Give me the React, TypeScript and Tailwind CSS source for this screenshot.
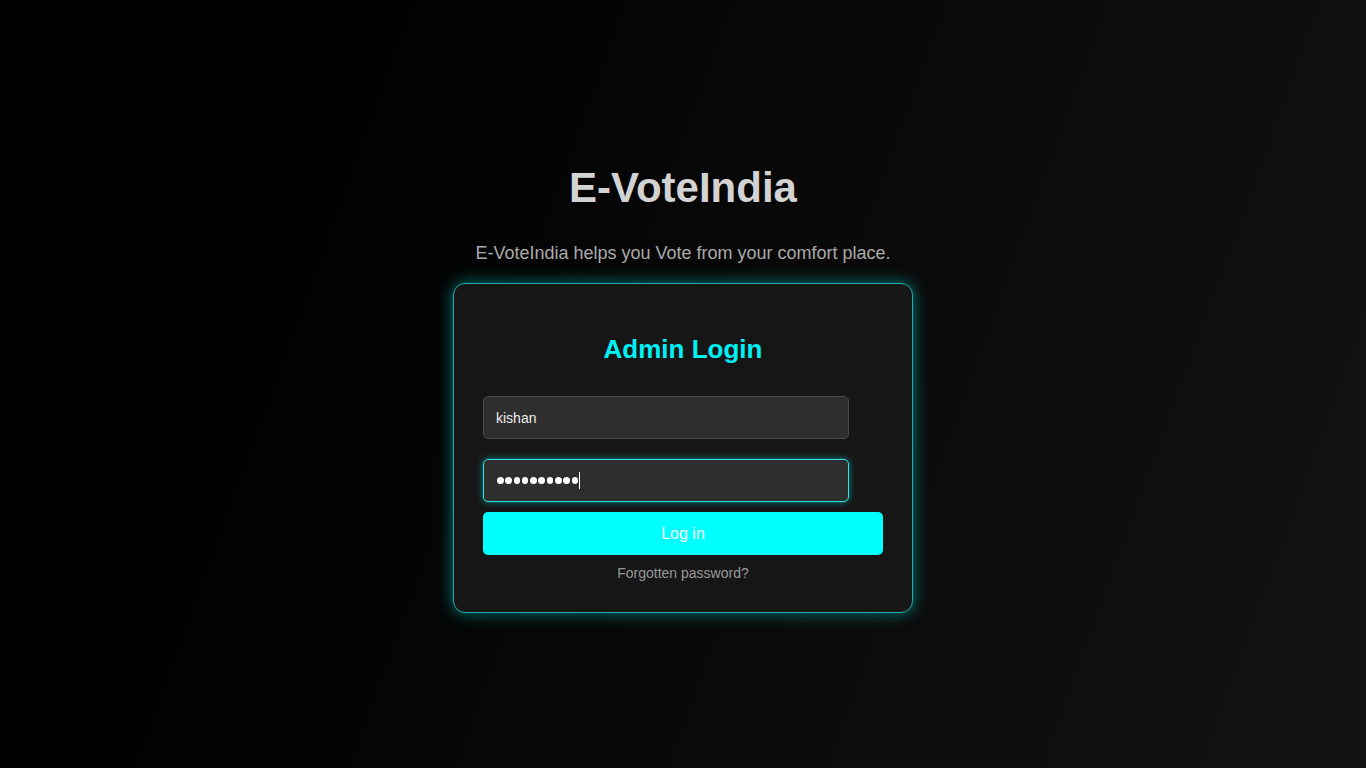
export default function App() {
  return (
    <div
      className="flex min-h-screen w-full flex-col items-center bg-[linear-gradient(110deg,#000_18%,#131313)] pt-[164px]"
      style={{ fontFamily: '"Liberation Sans", Arial, sans-serif' }}
    >
      <h1 className="text-[42px] leading-[48px] font-bold text-[#d3d3d3]">E-VoteIndia</h1>
      <p className="mt-[31px] text-[18px] leading-[21px] text-[#aaaaaa]">
        E-VoteIndia helps you Vote from your comfort place.
      </p>

      <div className="mt-[19px] flex h-[330px] w-[460px] flex-col rounded-[12px] border border-[#19b0b0] bg-[#161616] px-[29px] pt-[50px] shadow-[0_0_16px_rgba(0,255,255,0.45)]">
        <h2 className="text-center text-[26px] leading-[30px] font-bold text-[#00f0f5]">Admin Login</h2>

        <input
          readOnly
          value="kishan"
          className="mt-[32px] h-[43px] w-[366px] rounded-[5px] border border-[#4a4a4a] bg-[#2e2e2e] px-[12px] text-[14px] text-[#eeeeee] outline-none"
        />

        <div className="mt-[20px] flex h-[43px] w-[366px] items-center rounded-[5px] border border-[#2fe0e0] bg-[#2e2e2e] pl-[13px] shadow-[0_0_6px_rgba(0,255,255,0.5)]">
          <div className="flex items-center gap-[1.8px]">
            {Array.from({ length: 10 }).map((_, i) => (
              <span key={i} className="h-[6.5px] w-[6.5px] rounded-full bg-white" />
            ))}
          </div>
          <span className="ml-[1px] h-[17px] w-px bg-white" />
        </div>

        <button className="mt-[10px] h-[43px] w-[400px] rounded-[5px] bg-[#00ffff] pt-px text-[16px] text-white">
          Log in
        </button>

        <div className="mt-[10px] text-center text-[14px] leading-[16px] text-[#999999]">Forgotten password?</div>
      </div>
    </div>
  )
}
